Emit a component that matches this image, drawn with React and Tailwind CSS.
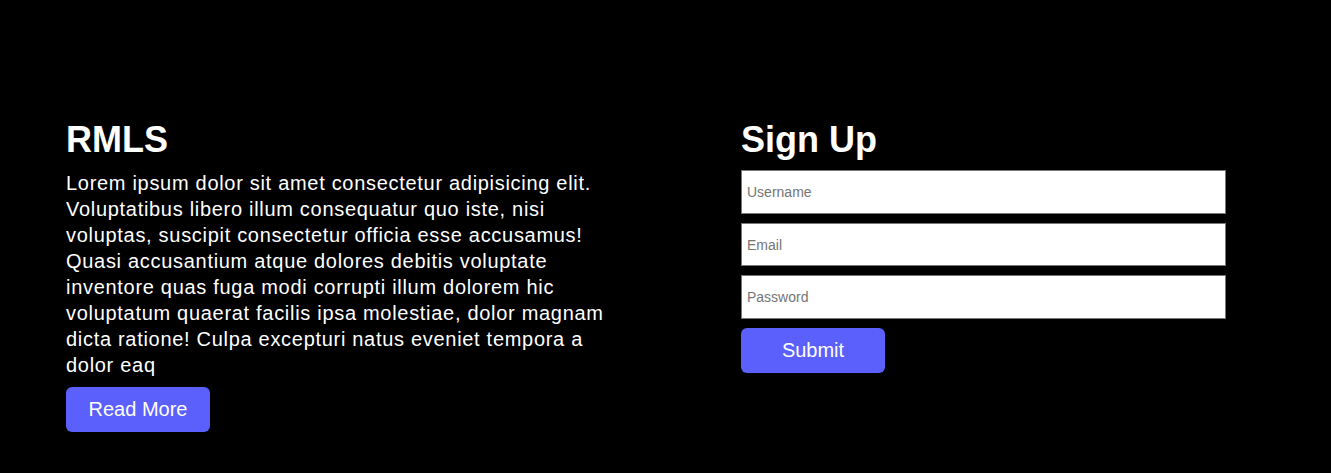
import React from "react";

export default function App() {
  return (
    <div
      className="min-h-screen w-full bg-black text-white"
      style={{ fontFamily: '"Liberation Sans", Arial, sans-serif' }}
    >
      <div className="flex pt-[119px] pl-[66px]">
        <div className="w-[555px] flex flex-col">
          <h1 className="text-[36px] leading-[41px] font-bold mb-[10px]">RMLS</h1>
          <p className="text-[20px] leading-[26px] tracking-[0.7px]">
            Lorem ipsum dolor sit amet consectetur adipisicing elit. Voluptatibus libero illum
            consequatur quo iste, nisi voluptas, suscipit consectetur officia esse accusamus! Quasi
            accusantium atque dolores debitis voluptate inventore quas fuga modi corrupti illum
            dolorem hic voluptatum quaerat facilis ipsa molestiae, dolor magnam dicta ratione! Culpa
            excepturi natus eveniet tempora a dolor eaq
          </p>
          <button className="mt-[9px] self-start w-36 h-[45px] rounded-md bg-[#5b5ffb] text-white text-[20px] leading-[23px]">
            Read More
          </button>
        </div>
        <div className="ml-[120px] w-[485px] flex flex-col">
          <h1 className="text-[36px] leading-[41px] font-bold mb-[10px]">Sign Up</h1>
          <form className="flex flex-col gap-[9px]" onSubmit={(e) => e.preventDefault()}>
            <input
              type="text"
              placeholder="Username"
              className="h-[44px] w-full border border-[#767676] bg-white px-[5px] text-[14px] text-black placeholder:text-[#757575] outline-none"
            />
            <input
              type="email"
              placeholder="Email"
              className="h-[43px] w-full border border-[#767676] bg-white px-[5px] text-[14px] text-black placeholder:text-[#757575] outline-none"
            />
            <input
              type="password"
              placeholder="Password"
              className="h-[44px] w-full border border-[#767676] bg-white px-[5px] text-[14px] text-black placeholder:text-[#757575] outline-none"
            />
            <button
              type="submit"
              className="self-start w-36 h-[45px] rounded-md bg-[#5b5ffb] text-white text-[20px] leading-[23px]"
            >
              Submit
            </button>
          </form>
        </div>
      </div>
    </div>
  );
}
